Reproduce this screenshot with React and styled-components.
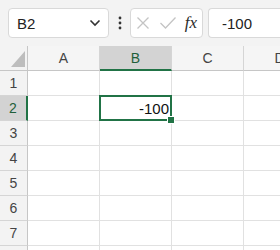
import { Fragment } from 'react';
import styled, { createGlobalStyle } from 'styled-components';

const GREEN = '#217346';

const GlobalStyle = createGlobalStyle`
  html, body {
    margin: 0;
    padding: 0;
    background: #ffffff;
    overflow: hidden;
  }
  body {
    font-family: "Liberation Sans", Arial, sans-serif;
  }
`;

const Page = styled.div`
  width: 280px;
  height: 250px;
  overflow: hidden;
`;

const Toolbar = styled.div`
  display: flex;
  align-items: center;
  height: 46px;
  padding-left: 8px;
  background: #f3f3f3;
  box-sizing: border-box;
`;

const NameBox = styled.div`
  display: flex;
  align-items: center;
  justify-content: space-between;
  box-sizing: border-box;
  width: 101px;
  height: 30px;
  padding: 0 7px 0 8px;
  background: #fff;
  border: 1px solid #d9d9d9;
  border-radius: 4px;
  font-size: 15px;
  color: #222;
`;

const Dots = styled.div`
  width: 21px;
  display: flex;
  justify-content: center;
`;

const FuncBox = styled.div`
  display: flex;
  align-items: center;
  justify-content: space-between;
  box-sizing: border-box;
  width: 73px;
  height: 30px;
  padding: 0 5px 0 4px;
  background: #fff;
  border: 1px solid #d9d9d9;
  border-radius: 4px;
`;

const Fx = styled.span`
  font-family: "Liberation Serif", "DejaVu Serif", serif;
  font-style: italic;
  font-size: 17px;
  color: #2b2b2b;
`;

const FormulaInput = styled.div`
  display: flex;
  align-items: center;
  box-sizing: border-box;
  margin-left: 5px;
  flex: 1;
  height: 30px;
  padding-left: 13px;
  background: #fff;
  border: 1px solid #d9d9d9;
  border-right: none;
  border-radius: 4px 0 0 4px;
  font-size: 15px;
  color: #222;
`;

const Sheet = styled.div`
  display: grid;
  grid-template-columns: 28px 72px 72px 72px 72px;
  grid-auto-rows: 25px;
`;

const Corner = styled.div`
  position: relative;
  box-sizing: border-box;
  background: #f3f3f3;
  border-right: 1px solid #c6c6c6;
  border-bottom: 1px solid #c6c6c6;
`;

const ColHead = styled.div`
  display: flex;
  align-items: center;
  justify-content: center;
  box-sizing: border-box;
  font-size: 14px;
  color: ${({ $active }) => ($active ? '#1f5f3a' : '#444')};
  background: ${({ $active }) => ($active ? '#d3d3d3' : '#f5f5f5')};
  border-right: 1px solid #d5d5d5;
  border-bottom: ${({ $active }) => ($active ? `2px solid ${GREEN}` : '1px solid #c6c6c6')};
`;

const RowHead = styled.div`
  display: flex;
  align-items: center;
  justify-content: center;
  box-sizing: border-box;
  font-size: 14px;
  color: ${({ $active }) => ($active ? '#1f5f3a' : '#444')};
  background: ${({ $active }) => ($active ? '#d3d3d3' : '#f3f3f3')};
  border-bottom: 1px solid #d5d5d5;
  border-right: ${({ $active }) => ($active ? `2px solid ${GREEN}` : '1px solid #c6c6c6')};
`;

const Cell = styled.div`
  position: relative;
  display: flex;
  align-items: center;
  justify-content: flex-end;
  box-sizing: border-box;
  padding-right: 2px;
  font-size: 15px;
  color: #111;
  background: #fff;
  border-right: 1px solid #e1e1e1;
  border-bottom: 1px solid #e1e1e1;

  ${({ $selected }) =>
    $selected &&
    `
    &::after {
      content: '';
      position: absolute;
      left: -1px;
      top: -1px;
      right: -1px;
      bottom: -1px;
      border: 2px solid ${GREEN};
      pointer-events: none;
    }
  `}
`;

const FillHandle = styled.span`
  position: absolute;
  right: -4px;
  bottom: -4px;
  width: 6px;
  height: 6px;
  background: ${GREEN};
  border: 1px solid #fff;
  z-index: 2;
`;

const Chevron = () => (
  <svg width="12" height="8" viewBox="0 0 12 8">
    <path d="M1.5 1.5 L6 6 L10.5 1.5" fill="none" stroke="#333" strokeWidth="1.6" />
  </svg>
);

const VDots = () => (
  <svg width="4" height="14" viewBox="0 0 4 14">
    <circle cx="2" cy="2" r="1.4" fill="#333" />
    <circle cx="2" cy="7" r="1.4" fill="#333" />
    <circle cx="2" cy="12" r="1.4" fill="#333" />
  </svg>
);

const Cross = () => (
  <svg width="16" height="16" viewBox="0 0 16 16">
    <path d="M2.5 2.5 L13.5 13.5 M13.5 2.5 L2.5 13.5" stroke="#c4c4c4" strokeWidth="1.3" />
  </svg>
);

const Check = () => (
  <svg width="18" height="16" viewBox="0 0 18 16">
    <path d="M1.5 8 L6.5 13 L16.5 2.5" fill="none" stroke="#c4c4c4" strokeWidth="1.3" />
  </svg>
);

const CornerMark = () => (
  <svg
    width="14"
    height="16"
    viewBox="0 0 14 16"
    style={{ position: 'absolute', right: 2, bottom: 3 }}
  >
    <polygon points="14,0 14,16 0,16" fill="#bdbdbd" />
  </svg>
);

const columns = ['A', 'B', 'C', 'D'];
const rows = [1, 2, 3, 4, 5, 6, 7, 8];

export default function App() {
  return (
    <Page>
      <GlobalStyle />
      <Toolbar>
        <NameBox>
          <span>B2</span>
          <Chevron />
        </NameBox>
        <Dots>
          <VDots />
        </Dots>
        <FuncBox>
          <Cross />
          <Check />
          <Fx>fx</Fx>
        </FuncBox>
        <FormulaInput>-100</FormulaInput>
      </Toolbar>
      <Sheet>
        <Corner>
          <CornerMark />
        </Corner>
        {columns.map((c) => (
          <ColHead key={c} $active={c === 'B'}>
            {c}
          </ColHead>
        ))}
        {rows.map((r) => (
          <Fragment key={r}>
            <RowHead $active={r === 2}>{r}</RowHead>
            {columns.map((c) => {
              const selected = r === 2 && c === 'B';
              return (
                <Cell key={`${c}${r}`} $selected={selected}>
                  {selected && '-100'}
                  {selected && <FillHandle />}
                </Cell>
              );
            })}
          </Fragment>
        ))}
      </Sheet>
    </Page>
  );
}
